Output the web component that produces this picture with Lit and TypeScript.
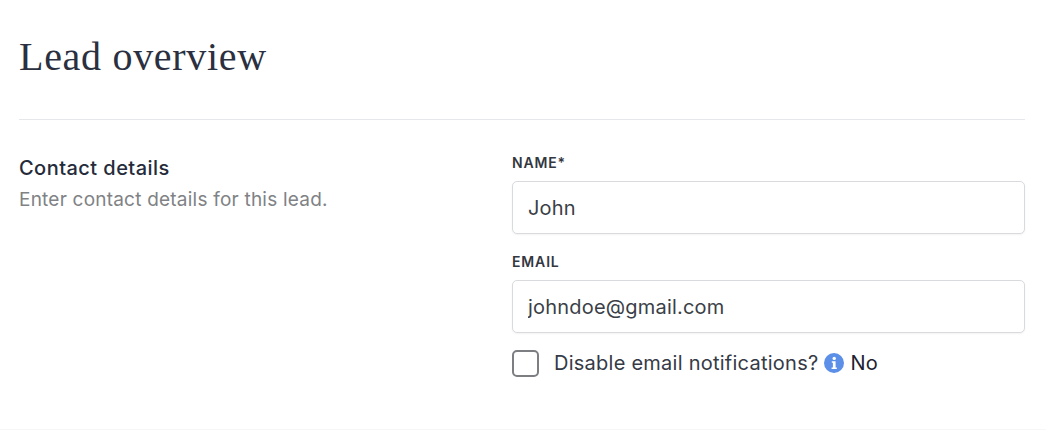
import { LitElement, html, css } from "lit";
import { customElement } from "lit/decorators.js";

@customElement("app-root")
export class AppRoot extends LitElement {
  static styles = css`
    :host {
      display: block;
      width: 1046px;
      height: 430px;
      box-sizing: border-box;
      padding: 0 21px 0 19px;
      background: #fff;
      font-family: Inter, "Liberation Sans", sans-serif;
      overflow: hidden;
      position: relative;
    }
    .title {
      margin: 0;
      padding: 32px 0 38px;
      height: 49px;
      box-sizing: content-box;
      font: 400 40px/49px "Liberation Serif", serif;
      letter-spacing: 0.7px;
      color: #2a3040;
      border-bottom: 1px solid #e5e7eb;
    }
    .section {
      display: grid;
      grid-template-columns: 493px 513px;
      padding-top: 35px;
    }
    .side h2 {
      margin: 1px 0 0;
      font-size: 20px;
      line-height: 24px;
      font-weight: 500;
      letter-spacing: 0.45px;
      color: #252b3a;
    }
    .side p {
      margin: 8px 0 0;
      font-size: 19px;
      line-height: 24px;
      letter-spacing: 0.22px;
      color: #808285;
    }
    .fields {
      display: flex;
      flex-direction: column;
    }
    label.cap {
      display: block;
      font-size: 14px;
      line-height: 16px;
      font-weight: 600;
      letter-spacing: 0.85px;
      color: #33373f;
      margin-bottom: 10px;
    }
    input.text {
      display: block;
      width: 100%;
      height: 53px;
      box-sizing: border-box;
      padding: 0 15px;
      margin: 0 0 20px;
      border: 1px solid #d9dadd;
      border-radius: 5px;
      background: #fff;
      box-shadow: 0 1px 2px rgba(0, 0, 0, 0.05);
      font: 400 20px Inter, "Liberation Sans", sans-serif;
      letter-spacing: 0.2px;
      color: #3b3f47;
      outline: none;
    }
    .check {
      display: flex;
      align-items: center;
      margin-top: -5px;
      font-size: 20px;
      line-height: 30px;
      letter-spacing: 0.25px;
      color: #353a46;
    }
    .box {
      width: 27px;
      height: 27px;
      box-sizing: border-box;
      border: 2px solid #7c7e82;
      border-radius: 5px;
      margin-right: 15px;
      background: #fff;
    }
    .info {
      width: 20px;
      height: 20px;
      margin: 0 6px;
      display: block;
    }
    .val {
      color: #1d2230;
      font-weight: 400;
    }
    .bottom {
      position: absolute;
      left: 0;
      right: 0;
      bottom: 0;
      height: 1px;
      background: #f7f7f8;
    }
  `;

  render() {
    return html`
      <h1 class="title">Lead overview</h1>
      <div class="section">
        <div class="side">
          <h2>Contact details</h2>
          <p>Enter contact details for this lead.</p>
        </div>
        <div class="fields">
          <label class="cap">NAME*</label>
          <input class="text" .value=${"John"} />
          <label class="cap">EMAIL</label>
          <input class="text" .value=${"johndoe@gmail.com"} />
          <div class="check">
            <span class="box"></span>
            <span>Disable email notifications?</span>
            <svg class="info" viewBox="0 0 20 20">
              <circle cx="10" cy="10" r="10" fill="#5b8fe8"></circle>
              <circle cx="10.2" cy="5.4" r="1.7" fill="#fff"></circle>
              <path d="M7.8 8.3h3.8v6.2h1.2v1.5H7.6v-1.5h1.3V9.8H7.8z" fill="#fff"></path>
            </svg>
            <span class="val">No</span>
          </div>
        </div>
      </div>
      <div class="bottom"></div>
    `;
  }
}
